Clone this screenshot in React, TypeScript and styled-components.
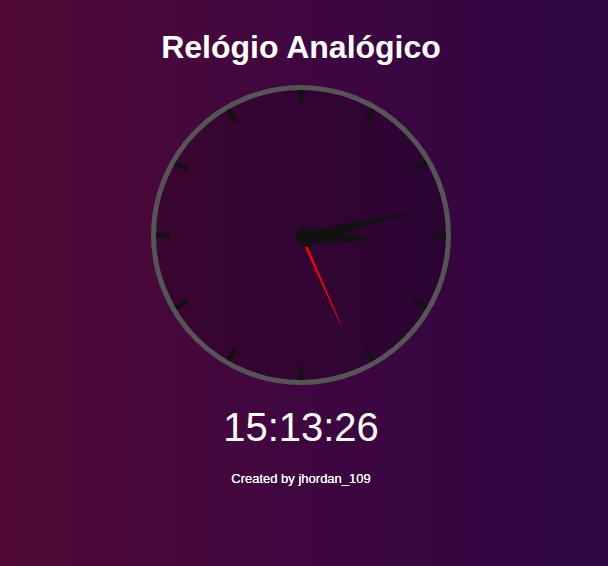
import React from "react";
import styled, { createGlobalStyle } from "styled-components";

const Global = createGlobalStyle`
  html, body { margin: 0; padding: 0; }
  body {
    min-height: 566px;
    background: linear-gradient(to right, #510a35, #3f0640 50%, #2d0642);
    font-family: "Liberation Sans", Arial, sans-serif;
    color: #fff;
  }
`;

const Page = styled.main`
  display: flex;
  flex-direction: column;
  align-items: center;
  padding: 29px 6px 0 0;
  min-height: 566px;
  box-sizing: border-box;
`;

const Title = styled.h1`
  margin: 0 0 19px;
  font-size: 32px;
  font-weight: 700;
  line-height: 37px;
`;

const Face = styled.div`
  width: 300px;
  height: 300px;
  box-sizing: border-box;
  border: 5px solid #555;
  border-radius: 50%;
  background: rgba(0, 0, 0, 0.2);
  display: flex;
`;

const Dial = styled.svg`
  width: 290px;
  height: 290px;
  display: block;
`;

const Time = styled.div`
  margin-top: 19px;
  font-size: 40px;
  line-height: 46px;
`;

const Credit = styled.p`
  margin: 21px 0 0;
  font-size: 13px;
  line-height: 15px;
  text-shadow: 0 0 0.4px #fff;
`;

const ticks = Array.from({ length: 12 }, (_, i) => i * 30);

export default function App() {
  return (
    <>
      <Global />
      <Page>
        <Title>Relógio Analógico</Title>
        <Face>
          <Dial viewBox="-145 -145 290 290">
            {ticks.map((a) => (
              <line
                key={a}
                x1={0}
                y1={-145}
                x2={0}
                y2={-131}
                stroke="#111"
                strokeWidth={4.5}
                transform={`rotate(${a})`}
              />
            ))}
            <path
              d="M0,-5 Q34,-6.5 66,-0.5 Q68,0 66,0.5 Q34,6.5 0,5 Z"
              fill="#111"
              transform="translate(5 2.5) rotate(0.4)"
            />
            <path
              d="M0,-5.5 Q40,-4.5 114,0 Q40,4.5 0,5.5 Z"
              fill="#111"
              transform="translate(5 2) rotate(-13.2)"
            />
            <path
              d="M0,-1.5 L96,-0.3 L96,0.3 L0,1.5 Z"
              fill="#ff0000"
              transform="translate(1 2) rotate(66.1)"
            />
            <circle cx={5} cy={2} r={10} fill="#111" />
          </Dial>
        </Face>
        <Time>15:13:26</Time>
        <Credit>Created by jhordan_109</Credit>
      </Page>
    </>
  );
}
